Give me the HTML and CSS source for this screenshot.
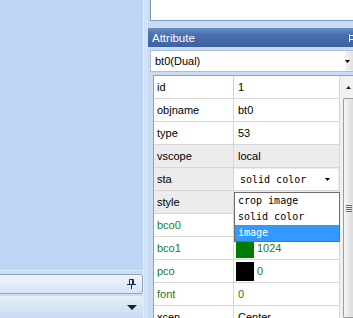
FILE: index.html
```html
<!DOCTYPE html>
<html lang="en">
<head>
    <meta charset="UTF-8">
    <title>Attribute</title>
    <link rel="stylesheet" href="styles.css">
</head>
<body>
    <div class="left">
        <div class="canvas"></div>
        <div class="dockbar">
            <svg class="pin" width="9" height="10" viewBox="0 0 9 10">
                <path d="M2.5 0.5h4v5h-4z M0 5.5h9 M4.5 5.5v4.5 M5.5 1v4" fill="none" stroke="#1b2b4d" stroke-width="1"/>
            </svg>
        </div>
        <div class="dropbar">
            <svg width="10" height="5" viewBox="0 0 10 5"><path d="M0 0h10L5 5z" fill="#15233f"/></svg>
        </div>
    </div>
    <div class="splitter"></div>
    <div class="right">
        <div class="topbox"></div>
        <div class="title">
            <span>Attribute</span>
            <svg class="title-pin" width="9" height="8" viewBox="0 0 9 8">
                <path d="M0.5 1.5h6v4h-6z M0.5 0v8" fill="none" stroke="#fff" stroke-width="1"/>
            </svg>
        </div>
        <div class="objsel">
            <span>bt0(Dual)</span>
            <span class="objsel-btn"><svg width="5" height="3" viewBox="0 0 5 3"><path d="M0 0h5L2.5 3z" fill="#000"/></svg></span>
        </div>
        <div class="grid">
            <div class="rows">
                <div class="row"><div class="key">id</div><div class="val">1</div></div>
                <div class="row"><div class="key">objname</div><div class="val">bt0</div></div>
                <div class="row"><div class="key">type</div><div class="val">53</div></div>
                <div class="row alt"><div class="key">vscope</div><div class="val">local</div></div>
                <div class="row alt">
                    <div class="key">sta</div>
                    <div class="val combo-cell">
                        <div class="combo">
                            <span>solid color</span>
                            <svg width="5" height="3" viewBox="0 0 5 3"><path d="M0 0h5L2.5 3z" fill="#000"/></svg>
                        </div>
                    </div>
                </div>
                <div class="row alt"><div class="key">style</div><div class="val"></div></div>
                <div class="row live"><div class="key">bco0</div><div class="val"></div></div>
                <div class="row live"><div class="key">bco1</div><div class="val"><span class="swatch green"></span>1024</div></div>
                <div class="row live"><div class="key">pco</div><div class="val"><span class="swatch black"></span>0</div></div>
                <div class="row live"><div class="key">font</div><div class="val">0</div></div>
                <div class="row"><div class="key">xcen</div><div class="val">Center</div></div>
            </div>
            <div class="vscroll">
                <div class="vscroll-up"><svg width="5" height="3" viewBox="0 0 5 3"><path d="M0 3h5L2.5 0z" fill="#222"/></svg></div>
                <div class="vscroll-thumb"><span class="grip"></span></div>
            </div>
            <ul class="droplist">
                <li>crop image</li>
                <li>solid color</li>
                <li class="selected">image</li>
            </ul>
        </div>
    </div>
</body>
</html>
```

FILE: styles.css
```css
body {
    margin: 0;
    width: 353px;
    height: 318px;
    overflow: hidden;
    display: flex;
    font: 11px "Liberation Sans", Arial, sans-serif;
    color: #000;
    background: #c9dcf4;
}

/* left side: design canvas and docked bars */
.left {
    width: 143px;
    display: flex;
    flex-direction: column;
}
.left > div {
    flex-shrink: 0;
}
.canvas {
    height: 270px;
    background: #bed6f5;
    border-bottom: 1px solid #dae8f9;
}
.dockbar {
    box-sizing: border-box;
    height: 20px;
    margin: 3px 0 2px -6px;
    padding-right: 6px;
    display: flex;
    justify-content: flex-end;
    align-items: center;
    border: 1px solid #8ea8cb;
    border-radius: 3px;
    background: linear-gradient(#f0f5fc, #d6e4f6);
}
.left .dropbar {
    flex: 1 0 22px;
    margin-left: -6px;
    padding-right: 6px;
    display: flex;
    justify-content: flex-end;
    align-items: center;
    border-radius: 3px 3px 0 0;
    background: linear-gradient(#e9f0fa, #c8daf1);
}

.splitter {
    width: 5px;
    flex-shrink: 0;
    background: #d2e2f7;
    border-left: 1px solid #e2ecfa;
    box-sizing: border-box;
}

/* right side: attribute panel */
.right {
    width: 205px;
    flex-shrink: 0;
    display: flex;
    flex-direction: column;
}
.right > div {
    flex-shrink: 0;
}
.topbox {
    box-sizing: border-box;
    height: 21px;
    margin-left: 2px;
    background: #fff;
    border-left: 1px solid #7f9bc2;
    border-bottom: 1px solid #7f9bc2;
}
.title {
    height: 19px;
    margin-top: 7px;
    padding-left: 4px;
    display: flex;
    justify-content: space-between;
    align-items: center;
    color: #fff;
    font-size: 11.5px;
    background: linear-gradient(#6b8fca, #4a6fae 35%, #3d61a1);
}
.title-pin {
    margin-right: -5px;
}
.objsel {
    box-sizing: border-box;
    height: 22px;
    margin: 3px 0 0 2px;
    padding-left: 4px;
    display: flex;
    justify-content: space-between;
    align-items: center;
    background: #fff;
    border: 1px solid #a9bfdc;
    border-right: none;
}
.objsel-btn {
    width: 8px;
    align-self: stretch;
    display: flex;
    align-items: center;
    background: linear-gradient(90deg, #f4f4f4, #e2e2e2);
}

.grid {
    position: relative;
    margin: 3px 0 0 5px;
    display: flex;
    align-items: flex-start;
    background: #fff;
    border-top: 1px solid #a0a0a0;
    border-left: 1px solid #a0a0a0;
}
.rows {
    width: 186px;
}
.row {
    box-sizing: border-box;
    height: 23px;
    display: grid;
    grid-template-columns: 80px 106px;
    border-bottom: 1px solid #d7d7d7;
}
.row.alt {
    background: #ececec;
}
.key, .val {
    display: flex;
    align-items: center;
    border-right: 1px solid #d7d7d7;
}
.key {
    padding-left: 3px;
}
.val {
    padding-left: 4px;
}
.row.live {
    color: #1b7d1b;
}
.swatch {
    width: 18px;
    height: 19px;
    margin: 0 3px 0 -2px;
}
.swatch.green {
    background: #007c00;
}
.swatch.black {
    background: #000;
}
.combo-cell {
    padding: 0 1px 0 0;
}
.combo {
    box-sizing: border-box;
    width: 104px;
    height: 21px;
    padding: 0 8px 0 6px;
    display: flex;
    justify-content: space-between;
    align-items: center;
    background: #fff;
    font: 10px "DejaVu Sans Mono", monospace;
}

.vscroll {
    width: 13px;
    align-self: stretch;
    display: flex;
    flex-direction: column;
    background: #f1f1f1;
}
.vscroll-up {
    height: 22px;
    flex-shrink: 0;
    display: flex;
    justify-content: center;
    align-items: center;
    padding-left: 3px;
}
.vscroll-thumb {
    height: 218px;
    flex-shrink: 0;
    margin-left: 3px;
    display: flex;
    align-items: center;
    justify-content: center;
    border: 1px solid #9c9c9c;
    border-right: none;
    border-radius: 2px 0 0 2px;
    background: linear-gradient(90deg, #f6f6f6, #dcdcdc);
}
.grip {
    width: 6px;
    height: 7px;
    background: repeating-linear-gradient(#6a6a6a 0 1px, transparent 1px 2px);
}

.droplist {
    position: absolute;
    left: 80px;
    top: 116px;
    width: 106px;
    margin: 0;
    padding: 0;
    list-style: none;
    box-sizing: border-box;
    background: #fff;
    border: 1px solid #6e6e6e;
    font: 10px "DejaVu Sans Mono", monospace;
}
.droplist li {
    height: 16px;
    line-height: 16px;
    padding-left: 3px;
}
.droplist li.selected {
    background: #3399ff;
    color: #fff;
}
```
